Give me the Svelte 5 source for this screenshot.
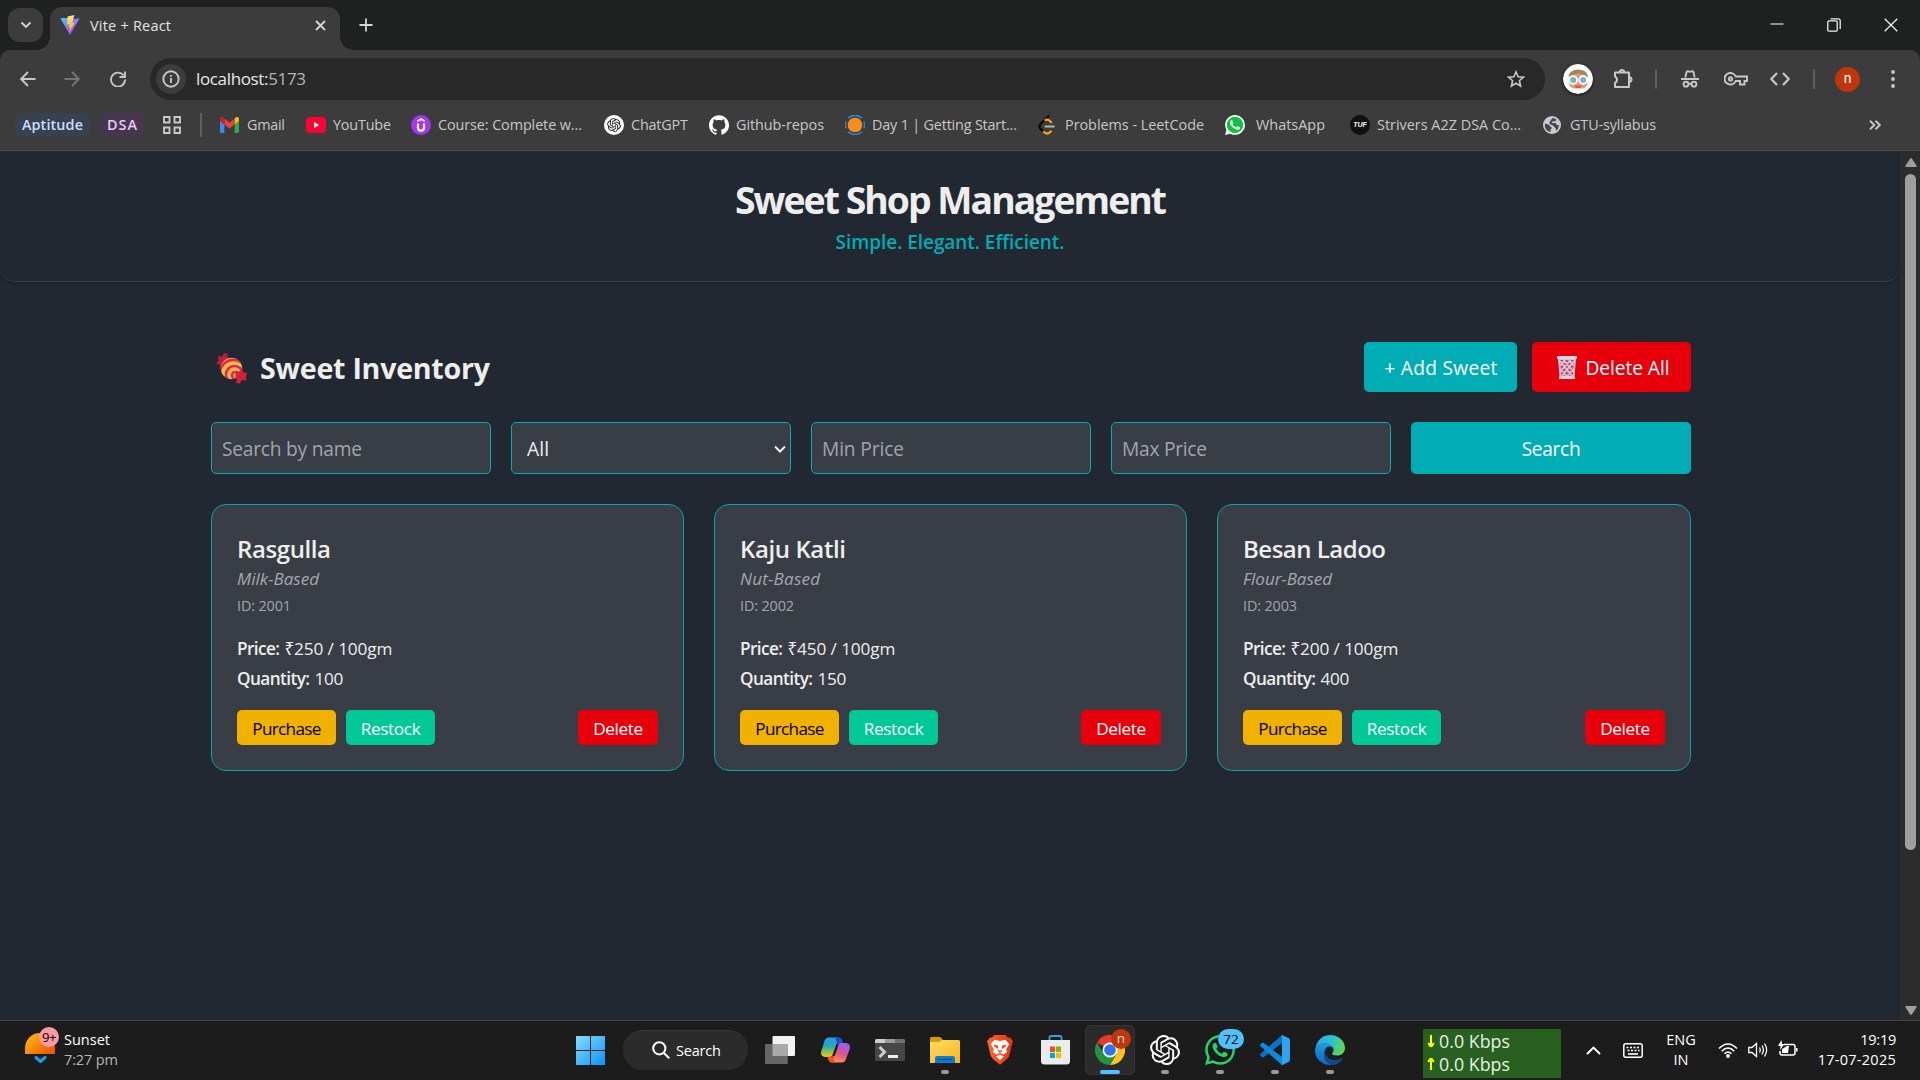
<script>
  const sweets = [
    { name: 'Rasgulla', nameW: 94, type: 'Milk-Based', typeW: 82, id: 2001, price: 250, qty: 100 },
    { name: 'Kaju Katli', nameW: 106, type: 'Nut-Based', typeW: 80, id: 2002, price: 450, qty: 150 },
    { name: 'Besan Ladoo', nameW: 143, type: 'Flour-Based', typeW: 89, id: 2003, price: 200, qty: 400 }
  ];

  const bookmarks = [
    { icon: 'gmail', label: 'Gmail', w: 38 },
    { icon: 'youtube', label: 'YouTube', w: 58 },
    { icon: 'udemy', label: 'Course: Complete w...', w: 144 },
    { icon: 'chatgpt', label: 'ChatGPT', w: 57 },
    { icon: 'github', label: 'Github-repos', w: 88 },
    { icon: 'day', label: 'Day 1 | Getting Start...', w: 145 },
    { icon: 'leet', label: 'Problems - LeetCode', w: 139 },
    { icon: 'whatsapp', label: 'WhatsApp', w: 69, wide: true },
    { icon: 'tuf', label: 'Strivers A2Z DSA Co...', w: 144 },
    { icon: 'globe', label: 'GTU-syllabus', w: 86 }
  ];

  const apps = [
    { icon: 'taskview' },
    { icon: 'copilot' },
    { icon: 'terminal' },
    { icon: 'explorer', running: true },
    { icon: 'brave' },
    { icon: 'store' },
    { icon: 'chrome', active: true, badge: 'n' },
    { icon: 'openai', running: true },
    { icon: 'wa', running: true, badge: '72' },
    { icon: 'vscode', running: true },
    { icon: 'edge', running: true }
  ];

  const openaiPath =
    'M22.2819 9.8211a5.9847 5.9847 0 0 0-.5157-4.9108 6.0462 6.0462 0 0 0-6.5098-2.9A6.0651 6.0651 0 0 0 4.9807 4.1818a5.9847 5.9847 0 0 0-3.9977 2.9 6.0462 6.0462 0 0 0 .7427 7.0966 5.98 5.98 0 0 0 .511 4.9107 6.051 6.051 0 0 0 6.5146 2.9001A5.9847 5.9847 0 0 0 13.2599 24a6.0557 6.0557 0 0 0 5.7718-4.2058 5.9894 5.9894 0 0 0 3.9977-2.9001 6.0557 6.0557 0 0 0-.7475-7.0729zm-9.022 12.6081a4.4755 4.4755 0 0 1-2.8764-1.0408l.1419-.0804 4.7783-2.7582a.7948.7948 0 0 0 .3927-.6813v-6.7369l2.02 1.1686a.071.071 0 0 1 .038.052v5.5826a4.504 4.504 0 0 1-4.4945 4.4944zm-9.6607-4.1254a4.4708 4.4708 0 0 1-.5346-3.0137l.142.0852 4.783 2.7582a.7712.7712 0 0 0 .7806 0l5.8428-3.3685v2.3324a.0804.0804 0 0 1-.0332.0615L9.74 19.9502a4.4992 4.4992 0 0 1-6.1408-1.6464zM2.3408 7.8956a4.485 4.485 0 0 1 2.3655-1.9728V11.6a.7664.7664 0 0 0 .3879.6765l5.8144 3.3543-2.0201 1.1685a.0757.0757 0 0 1-.071 0l-4.8303-2.7865A4.504 4.504 0 0 1 2.3408 7.872zm16.5963 3.8558L13.1038 8.364 15.1192 7.2a.0757.0757 0 0 1 .071 0l4.8303 2.7913a4.4944 4.4944 0 0 1-.6765 8.1042v-5.6772a.79.79 0 0 0-.407-.667zm2.0107-3.0231l-.142-.0852-4.7735-2.7818a.7759.7759 0 0 0-.7854 0L9.409 9.2297V6.8974a.0662.0662 0 0 1 .0284-.0615l4.8303-2.7866a4.4992 4.4992 0 0 1 6.6802 4.66zM8.3065 12.863l-2.02-1.1638a.0804.0804 0 0 1-.038-.0567V6.0742a4.4992 4.4992 0 0 1 7.3757-3.4537l-.142.0805L8.704 5.459a.7948.7948 0 0 0-.3927.6813zm1.0976-2.3654l2.602-1.4998 2.6069 1.4998v2.9994l-2.5974 1.4997-2.6067-1.4997Z';
  const githubPath =
    'M12 .297c-6.63 0-12 5.373-12 12 0 5.303 3.438 9.8 8.205 11.385.6.113.82-.258.82-.577 0-.285-.01-1.04-.015-2.04-3.338.724-4.042-1.61-4.042-1.61C4.422 18.07 3.633 17.7 3.633 17.7c-1.087-.744.084-.729.084-.729 1.205.084 1.838 1.236 1.838 1.236 1.07 1.835 2.809 1.305 3.495.998.108-.776.417-1.305.76-1.605-2.665-.3-5.466-1.332-5.466-5.93 0-1.31.465-2.38 1.235-3.22-.135-.303-.54-1.523.105-3.176 0 0 1.005-.322 3.3 1.23.96-.267 1.98-.399 3-.405 1.02.006 2.04.138 3 .405 2.28-1.552 3.285-1.23 3.285-1.23.645 1.653.24 2.873.12 3.176.765.84 1.23 1.91 1.23 3.22 0 4.61-2.805 5.625-5.475 5.92.42.36.81 1.096.81 2.22 0 1.606-.015 2.896-.015 3.286 0 .315.21.69.825.57C20.565 22.092 24 17.592 24 12.297c0-6.627-5.373-12-12-12';
  const handsetPath =
    'M17.472 14.382c-.297-.149-1.758-.867-2.03-.967-.273-.099-.471-.148-.67.15-.197.297-.767.966-.94 1.164-.173.199-.347.223-.644.075-.297-.15-1.255-.463-2.39-1.475-.883-.788-1.48-1.761-1.653-2.059-.173-.297-.018-.458.13-.606.134-.133.298-.347.446-.52.149-.174.198-.298.298-.497.099-.198.05-.371-.025-.52-.075-.149-.669-1.612-.916-2.207-.242-.579-.487-.5-.669-.51-.173-.008-.371-.01-.57-.01-.198 0-.52.074-.792.372-.272.297-1.04 1.016-1.04 2.479 0 1.462 1.065 2.875 1.213 3.074.149.198 2.096 3.2 5.077 4.487.709.306 1.262.489 1.694.625.712.227 1.36.195 1.871.118.571-.085 1.758-.719 2.006-1.413.248-.694.248-1.289.173-1.413-.074-.124-.272-.198-.57-.347';
  const bubblePath =
    'm12.051 21.785h-.004a9.87 9.87 0 01-5.031-1.378l-.361-.214-3.741.982.998-3.648-.235-.374a9.86 9.86 0 01-1.51-5.26c.001-5.45 4.436-9.884 9.888-9.884 2.64 0 5.122 1.03 6.988 2.898a9.825 9.825 0 012.893 6.994c-.003 5.45-4.437 9.884-9.885 9.884m8.413-18.297A11.815 11.815 0 0012.05 0C5.495 0 .16 5.335.157 11.892c0 2.096.547 4.142 1.588 5.945L.057 24l6.305-1.654a11.882 11.882 0 005.683 1.448h.005c6.554 0 11.89-5.335 11.893-11.893a11.821 11.821 0 00-3.48-8.413z';

  // Tracks a text run so that it spans the given width in pixels.
  function fit(node, width) {
    const natural = node.getBoundingClientRect().width;
    const gaps = node.textContent.trim().length - 1;
    if (gaps > 0) node.style.letterSpacing = `${(width - natural) / gaps}px`;
  }
</script>

{#snippet txt(text, w)}<span class="t" use:fit={w}>{text}</span>{/snippet}

{#snippet icon(name)}
  {#if name === 'vite'}
    <svg width="20" height="20" viewBox="0 0 20 20">
      <defs>
        <linearGradient id="va" x1="0" y1="0" x2=".6" y2="1"><stop offset="0" stop-color="#41d1ff" /><stop offset="1" stop-color="#bd34fe" /></linearGradient>
        <linearGradient id="vb" x1=".4" y1="0" x2=".6" y2="1"><stop offset="0" stop-color="#ffea83" /><stop offset="1" stop-color="#ffa800" /></linearGradient>
      </defs>
      <path d="M.4 3.2 10 20 19.7 3.2l-6.3 1-6.7-1.1z" fill="url(#va)" />
      <path d="M14.4 0 7.6 1.4 7 9.6l2.3-.5-.7 3.6 1.7-.5-.9 5.2 5.4-9.9-2.5.5z" fill="url(#vb)" />
    </svg>
  {:else if name === 'gmail'}
    <svg width="19" height="16" viewBox="0 0 20 16" preserveAspectRatio="none">
      <path d="M0 3v11.5Q0 16 1.4 16H4.6V7z" fill="#4285f4" />
      <path d="M20 3v11.5Q20 16 18.6 16H15.4V7z" fill="#34a853" />
      <path d="M15.4 1.8V7.5L20 4V2.2C20 .3 17.9-.8 16.4.6z" fill="#fbbc04" />
      <path d="M4.6 7.5V1.6L10 5.7l5.4-4.1v5.9L10 11.6z" fill="#ea4335" />
      <path d="M0 2.2V4l4.6 3.5V1.8L3.6.6C2.100-.8 0 .3 0 2.200z" fill="#c5221f" />
    </svg>
  {:else if name === 'youtube'}
    <svg width="20" height="16" viewBox="0 0 20 16"><rect width="20" height="16" rx="4" fill="#ff0033" /><path d="M8 5v6l5.200-3z" fill="#fff" /></svg>
  {:else if name === 'udemy'}
    <svg width="20" height="20" viewBox="0 0 20 20"><circle cx="10" cy="10" r="10" fill="#a435f0" /><path d="M7 8.500v4.200a3 3 0 0 0 6 0V8.500" fill="none" stroke="#fff" stroke-width="2.200" /><path d="M6.300 6.200 10 4l3.700 2.200" fill="none" stroke="#fff" stroke-width="1.700" /></svg>
  {:else if name === 'chatgpt'}
    <svg width="20" height="20" viewBox="0 0 20 20"><circle cx="10" cy="10" r="10" fill="#fff" /><path d={openaiPath} transform="translate(3.200 3.200) scale(.567)" fill="#111" /></svg>
  {:else if name === 'github'}
    <svg width="20" height="20" viewBox="0 0 24 24"><path d={githubPath} fill="#fff" /></svg>
  {:else if name === 'day'}
    <svg width="20" height="20" viewBox="0 0 20 20"><circle cx="10" cy="10" r="7.300" fill="#fa8c1e" /><path d="M3 3.200Q10-2.400 17 3.200M3 16.800q7 5.600 14 0M1.200 6.500Q-.3 10 1.200 13.500M18.800 6.500q1.500 3.500 0 7" fill="none" stroke="#2e86c9" stroke-width="1.500" /></svg>
  {:else if name === 'leet'}
    <svg width="17" height="20" viewBox="0 0 17 20" fill="none" stroke-width="2.200" stroke-linecap="round"><path d="M10.500 1.200 2.600 8.700q-2.300 2.600 0 5.200L5.800 17" stroke="#090909" /><path d="M7.500 5q2.400-1.200 4.600 1.300l1 1M5.800 17q3.500 3.200 7-.6" stroke="#ffa116" /><path d="M7.500 11.500h8.200" stroke="#b3b3b3" /></svg>
  {:else if name === 'whatsapp'}
    <svg width="20" height="20" viewBox="0 0 24 24"><path d="M12.050 0C5.500 0 .16 5.300.16 11.900c0 2.100.55 4.100 1.600 5.900L.06 24l6.300-1.650a11.900 11.900 0 0 0 17.600-10.450A11.900 11.900 0 0 0 12.050 0z" fill="#fff" /><circle cx="12" cy="12" r="9.900" fill="#10c043" /><path d={handsetPath} fill="#fff" /></svg>
  {:else if name === 'tuf'}
    <span class="tuf">TUF</span>
  {:else if name === 'globe'}
    <svg width="18" height="18" viewBox="0 0 18 18"><circle cx="9" cy="9" r="9" fill="#c7cacf" /><path d="M2 7.500Q5 8 6.500 9.500t2 1.500Q9 13 7.500 13.500V16Q2.500 15 1.800 10zM9.500 2q2.500.3 4 1.700L12 5.500 10 5 8.500 7h4l1 1.800 2.500.4Q15.600 13 13 14.800 13.500 12 11.500 11L10 9.500 6.500 8V6L8 4z" fill="#44474b" /></svg>
  {:else if name === 'taskview'}
    <svg width="30" height="28" viewBox="0 0 30 28"><rect x="7.500" width="22.500" height="20" rx="1" fill="#f2f2f2" /><rect y="8" width="22.800" height="20" rx="1" fill="#666" /><path d="M7.500 8h15.300v12H7.500z" fill="#a9a9a9" /></svg>
  {:else if name === 'copilot'}
    <svg width="29" height="26" viewBox="0 0 29 26">
      <defs>
        <linearGradient id="ca" x1="0" y1="0" x2="0" y2="1"><stop offset="0" stop-color="#1f9df5" /><stop offset=".45" stop-color="#2ba8b5" /><stop offset=".75" stop-color="#8cc63f" /><stop offset="1" stop-color="#f7c51e" /></linearGradient>
        <linearGradient id="cb" x1=".6" y1="0" x2=".3" y2="1"><stop offset="0" stop-color="#9b5cf6" /><stop offset=".5" stop-color="#e2508f" /><stop offset="1" stop-color="#fd9a52" /></linearGradient>
      </defs>
      <path d="M8 .5h9.500q2.500 0 3.300 2.500l1 3.500H16L12 17q-1 3-3.500 3H4q-5-.5-3.700-6L3.500 4Q4.500.5 8 .5z" fill="url(#ca)" />
      <path d="M14 .5h3.500q2.500 0 3.300 2.500l1 3.500h-5.500q-1-.5-1-3z" fill="#1850d5" />
      <path d="M20.500 25.500H11q-2.500 0-3.300-2.500l-.9-3.200H12L16.500 9q1-3 3.500-3h5q5 .5 3.700 6L25 22q-1 3.500-4.500 3.500z" fill="url(#cb)" />
      <path d="M15 25.500h-4q-2.500 0-3.300-2.500l-.9-3.200h5.500q1.200 1 .7 3z" fill="#f0542d" />
      <path d="m15.500 7-4 11.500 2 .8 4.200-11.800z" fill="#1c1c1c" />
    </svg>
  {:else if name === 'terminal'}
    <svg width="30" height="22" viewBox="0 0 30 22"><rect width="30" height="22" rx="1.500" fill="#464646" /><path d="M0 4V1.500Q0 0 1.500 0H10v4z" fill="#ccc" /><path d="M10 0h10v4H10z" fill="#9b9b9b" /><path d="M20 0h8.500Q30 0 30 1.500V4H20z" fill="#707070" /><path d="m4.500 8 5 5-5 5" fill="none" stroke="#ccc" stroke-width="3" /><path d="M13 16h10v3H13z" fill="#eee" /></svg>
  {:else if name === 'explorer'}
    <svg width="30" height="27" viewBox="0 0 30 27"><defs><linearGradient id="ea" x1="0" y1="0" x2="1" y2="1"><stop offset="0" stop-color="#ffdc6b" /><stop offset="1" stop-color="#fab413" /></linearGradient></defs><path d="M0 6V1.500Q0 0 1.500 0H9q1.500 0 2.500 1.200L13 3h12v4z" fill="#dd9a05" /><path d="M0 5h9l3-2h16.500Q30 3 30 4.500V26H0z" fill="url(#ea)" /><path d="M5 26v-5q0-2 2-2h16q2 0 2 2v5z" fill="#0e7bd0" /><path d="M8 22.500h14" stroke="#0a4f96" stroke-width="1.200" /></svg>
  {:else if name === 'brave'}
    <svg width="26" height="30" viewBox="0 0 26 30"><defs><linearGradient id="ba" x1="0" x2="1"><stop offset="0" stop-color="#fb6a2c" /><stop offset="1" stop-color="#ee2b12" /></linearGradient></defs><path d="M7.500 0h11L21 2.600l2.500.2L26 6.500l-1 2.800L22.500 20Q22 22.500 20 24l-7 5.800L6 24q-2-1.500-2.500-4L1 9.300 0 6.500l2.500-3.700 2.500-.2z" fill="url(#ba)" /><path d="M7.500 4.800 13 6l5.500-1.200 3.700 4.400-3 5.300.8 2.500-3.300 2.500L13 18l-3.700 1.500L6 17l.8-2.500-3-5.300zM13 19.500l3.800 2L13 25l-3.800-3.500z" fill="#fff" /><path d="m7 10.300 3.800.9-.3 1.800zM19 10.300l-3.800.9.3 1.800zM10.800 14.800 13 17.300l2.200-2.500" fill="none" stroke="#f1421c" stroke-width="1.100" /></svg>
  {:else if name === 'store'}
    <svg width="29" height="30" viewBox="0 0 29 30"><path d="M8.500 8V2.500Q8.500 1 10 1h9q1.500 0 1.500 1.500V8" fill="none" stroke="#2aa4e8" stroke-width="1.800" /><path d="M0 5h29v21q0 3.500-3.500 3.500h-22Q0 29.500 0 26z" fill="#ebebeb" /><path d="M9 11.500h5V17H9z" fill="#f25022" /><path d="M15 11.500h5V17h-5z" fill="#7fba00" /><path d="M9 17.800h5v5.200H9z" fill="#00a4ef" /><path d="M15 17.800h5v5.200h-5z" fill="#ffb900" /></svg>
  {:else if name === 'chrome'}
    <svg width="30" height="30" viewBox="0 0 30 30"><path d="M15 15 2 7.500A15 15 0 0 1 28 7.500z" fill="#e33b2e" /><path d="M15 15V7.500h13A15 15 0 0 1 15 30l6.500-11.200z" fill="#fcc31e" /><path d="M15 15l6.500 3.800L15 30A15 15 0 0 1 2 7.500l6.500 11.300z" fill="#229342" /><circle cx="15" cy="15" r="7.500" fill="#fff" /><circle cx="15" cy="15" r="5.800" fill="#2f74e8" /></svg>
  {:else if name === 'openai'}
    <svg width="30" height="30" viewBox="0 0 24 24"><path d={openaiPath} fill="#fff" /></svg>
  {:else if name === 'wa'}
    <svg width="30" height="30" viewBox="0 0 24 24" fill="#25d366"><path d={handsetPath} /><path d={bubblePath} /></svg>
  {:else if name === 'vscode'}
    <svg width="30" height="30" viewBox="0 0 30 30"><path d="M22 0v8L4 22q-1.200.8-2.200 0L.5 20.700q-1-1 0-2z" fill="#0b72c4" /><path d="M22 30v-8L4 8q-1.200-.8-2.200 0L.5 9.300q-1 1 0 2z" fill="#1388d8" /><path d="M22 0q-.6.200-1 .6Q22 .2 22 2v26q0 1.800-1 1.400.600.6 1.600.5L28.500 27q1.500-.8 1.500-2V5q0-1.200-1.500-2z" fill="#2ea4f0" /></svg>
  {:else if name === 'edge'}
    <svg width="30" height="30" viewBox="0 0 30 30">
      <defs>
        <linearGradient id="ga" x1="0" y1=".2" x2="1" y2=".4"><stop offset="0" stop-color="#2aa9ea" /><stop offset=".55" stop-color="#2cc1cf" /><stop offset="1" stop-color="#5fd84c" /></linearGradient>
        <linearGradient id="gb" x1="0" y1="0" x2="0" y2="1"><stop offset="0" stop-color="#1b9de2" /><stop offset="1" stop-color="#1067b9" /></linearGradient>
      </defs>
      <path d="M.5 13C2 4.500 8.500 0 15 0c8.500 0 15 6 15 13 0 5-4 7.500-8 7.500-3.500 0-5.300-1-5-2 1.200-1.500 1.800-2.500 1.500-4.500C18 10 13 8.500 9 8.500S2 10 .5 13z" fill="url(#ga)" />
      <path d="M0 15.500C.4 10.500 4.500 7.500 9.500 7.500S18.500 10 18.500 14c-.5-1.500-2-2.500-4-2.500-3 0-5.500 3.500-5.500 8 0 5.500 4.500 9 8.500 10.200-9 1.500-17.500-5-17.500-14.200z" fill="url(#gb)" />
      <path d="M12 13.500c-4 5 .5 12 8.500 11.500 3 0 5-1.200 7-2.300.5-.2.800.2.500.6C25.500 27.500 21.500 30 17.500 30 12.500 29 9 25 9 20c0-3 1-5 3-6.500z" fill="#104a8b" />
    </svg>
  {/if}
{/snippet}

<div class="screen">
  <div class="tabstrip">
    <div class="tabsearch"><svg width="12" height="8" viewBox="0 0 12 8"><path d="m1.500 1.500 4.500 4.500 4.500-4.500" /></svg></div>
    <div class="tab">
      {@render icon('vite')}
      <div class="tabtitle">{@render txt('Vite + React', 81)}</div>
      <svg width="11" height="11" viewBox="0 0 11 11"><path d="m1 1 9 9m0-9-9 9" /></svg>
    </div>
    <svg class="newtab" width="14" height="14" viewBox="0 0 14 14"><path d="M7 .5v13M.5 7h13" /></svg>
    <div class="winctl">
      <svg width="14" height="14" viewBox="0 0 14 14"><path d="M.5 6h13" stroke="#909090" stroke-width="2" /></svg>
      <svg width="14" height="14" viewBox="0 0 14 14"><path d="M.8 4q0-1.200 1.200-1.200h7q1.200 0 1.200 1.200v8q0 1.200-1.200 1.200H2Q.8 13.200.8 12zM3.500.8h7.700q2 0 2 2V11" /></svg>
      <svg width="14" height="14" viewBox="0 0 14 14"><path d="m.7.7 12.600 12.600m0-12.600L.7 13.300" /></svg>
    </div>
  </div>

  <div class="chrome">
    <div class="toolbar">
      <span><svg width="16" height="16" viewBox="0 0 16 16"><path d="M15.500 8H1.500M8 1 1.200 8 8 15" /></svg></span>
      <span class="dim"><svg width="16" height="16" viewBox="0 0 16 16"><path d="M.5 8h14M8 1l6.800 7L8 15" /></svg></span>
      <span><svg width="16" height="16" viewBox="0 0 16 16"><path d="M13.500 4.300A7 7 0 1 0 15 8.500M15 .5V6H9.500" /></svg></span>
      <div class="omni">
        <div class="info"><svg width="18" height="18" viewBox="0 0 18 18"><circle cx="9" cy="9" r="7.700" /><path d="M9 8v5M9 5v1.700" /></svg></div>
        <div class="url"><span class="t" use:fit={110}>localhost:<i>5173</i></span></div>
        <svg width="18" height="18" viewBox="0 0 18 18"><path d="m9 1.800 2.100 4.900 5.400.5-4.100 3.500 1.200 5.300L9 13.200 4.400 16l1.200-5.300-4.100-3.500 5.400-.5z" stroke-width="1.600" /></svg>
      </div>
      <span>
        <svg class="face" width="30" height="30" viewBox="0 0 30 30">
          <circle cx="15" cy="15" r="15" fill="#fff" stroke="none" />
          <g stroke="none"><path d="M6 15q0-9 9.500-9T24.500 15v5q-1 4-5 4.500h-9Q6.500 23 6 19z" fill="#dca07c" /><path d="M5.500 13Q6 5.500 15.500 5.500q9.500.5 9.500 8L22 11 15 9.500 7 12z" fill="#a08a5c" /><path d="M11.500 21.500h7.500l-1.500 2.500h-5z" fill="#e8573c" /></g>
          <g fill="#79b3c4" stroke="#fff" stroke-width="1.700"><circle cx="10.200" cy="16" r="3.900" /><circle cx="20.200" cy="16" r="3.900" /></g>
        </svg>
      </span>
      <span><svg width="20" height="21" viewBox="0 0 20 21"><path d="M2 3.500h14v14.500H2v-4.200q2-.600 2-3t-2-3zM6.700 3Q7 1 9 1t2.300 2M16.500 8q2 .4 2 2.500t-2 2.500" stroke-linejoin="round" stroke-width="2" /></svg></span>
      <b class="sep"></b>
      <span><svg width="18" height="18" viewBox="0 0 18 18"><path d="M4.300 7.500 5.500 2.300Q6 1 7.300 1.400 9 2 10.700 1.400 12 1 12.500 2.300l1.200 5.200M0 9h18" /><circle cx="5" cy="14.200" r="2.400" /><circle cx="13" cy="14.200" r="2.400" /><path d="M7.400 13.800h3.200" /></svg></span>
      <span><svg width="24" height="14" viewBox="0 0 24 14"><path d="M11.700 4.500A5.800 5.800 0 1 0 11.700 9H16v3.500h4.500V9H23V4.500z" stroke-width="1.900" /><circle cx="6.500" cy="6.900" r="1.600" /></svg></span>
      <span><svg width="20" height="14" viewBox="0 0 20 14"><path d="M7 1 1.300 7 7 13M13 1l5.700 6L13 13" stroke-width="2.200" /></svg></span>
      <b class="sep"></b>
      <em class="user">n</em>
      <span class="dots"><svg width="4" height="18" viewBox="0 0 4 18"><g fill="#c7c7c7" stroke="none"><circle cx="2" cy="2" r="1.900" /><circle cx="2" cy="9" r="1.900" /><circle cx="2" cy="16" r="1.900" /></g></svg></span>
    </div>

    <div class="bookmarks">
      <div class="chip blue">{@render txt('Aptitude', 61)}</div>
      <div class="chip purple">{@render txt('DSA', 30)}</div>
      <svg class="grid" width="18" height="18" viewBox="0 0 18 18"><path d="M1 1h5.500v5.500H1zM11.500 1H17v5.500h-5.500zM1 11.500h5.500V17H1zM11.500 11.500H17V17h-5.500z" /></svg>
      <b class="sep"></b>
      <div class="links">
        {#each bookmarks as b}
          <div class="link"><span class="fav" class:wide={b.wide}>{@render icon(b.icon)}</span>{@render txt(b.label, b.w)}</div>
        {/each}
      </div>
      <svg class="more" width="12" height="10" viewBox="0 0 12 10"><path d="m1 .8 4.300 4.200L1 9.200M6.500.8 10.800 5 6.500 9.200" /></svg>
    </div>
  </div>

  <div class="viewport">
    <div class="page">
      <header>
        <h1>{@render txt('Sweet Shop Management', 432)}</h1>
        <p>{@render txt('Simple. Elegant. Efficient.', 229)}</p>
      </header>
      <main>
        <div class="head">
          <svg class="candy" width="31" height="31" viewBox="0 0 31 31">
            <defs><clipPath id="ball"><circle cx="15.500" cy="15.500" r="10.700" /></clipPath></defs>
            <path d="M11 10.500 9.500 12 6.500 14 4 15 4 12 0 10.500 2.500 7.500 2 3 6 3.500 8 0l3.500.5L12 5z" fill="#b81d40" />
            <g clip-path="url(#ball)">
              <path d="M4 4h23v23H4z" fill="#f9b93f" />
              <g fill="none" stroke="#d42a5c" stroke-width="2.600"><circle cx="19.500" cy="22.500" r="3.500" /><circle cx="18.500" cy="21.500" r="8.500" /><circle cx="17.500" cy="20.500" r="13.600" /></g>
            </g>
            <path d="M20 19.500 24 18l2.500-1 .5 2.500 4 .5-1 3.500.5 4-4.500-.5-2 3.500-4-.5 1-4-2-3z" fill="#d4213d" />
          </svg>
          <h2>{@render txt('Sweet Inventory', 230)}</h2>
          <button class="add">{@render txt('+ Add Sweet', 113)}</button>
          <button class="delall">
            <svg width="20" height="23" viewBox="0 0 20 23"><path d="M1 2h18l-1.700 20H2.700z" fill="#d8405f" /><g fill="none" stroke="#cfc8dc" stroke-width="1.800"><path d="M2 3h16l-1.500 18h-13zM3 5l12 15M2.500 12l8 9M6.500 4 17 16M12 4l6 7M17 5 5 20M17.500 12l-8 9M13.500 4 3 16M8 4l-6 7" /></g><path d="M0 0h20v3H0zM2 20.500h16V23H2z" fill="#ded8e6" /></svg>
            {@render txt('Delete All', 84)}
          </button>
        </div>
        <div class="filters">
          <div class="field">{@render txt('Search by name', 140)}</div>
          <div class="field select">{@render txt('All', 22)}<svg width="12" height="8" viewBox="0 0 12 8"><path d="m1 1.500 5 5 5-5" /></svg></div>
          <div class="field">{@render txt('Min Price', 82)}</div>
          <div class="field">{@render txt('Max Price', 85)}</div>
          <button class="search">{@render txt('Search', 59)}</button>
        </div>
        <div class="cards">
          {#each sweets as s}
            <article>
              <h3>{@render txt(s.name, s.nameW)}</h3>
              <div class="type">{@render txt(s.type, s.typeW)}</div>
              <div class="id">{@render txt(`ID: ${s.id}`, 54)}</div>
              <div class="row first"><strong>{@render txt('Price:', 43)}</strong>{@render txt(`₹${s.price} / 100gm`, 108)}</div>
              <div class="row"><strong>{@render txt('Quantity:', 73)}</strong>{@render txt(`${s.qty}`, 29)}</div>
              <div class="actions">
                <button class="buy">{@render txt('Purchase', 69)}</button>
                <button class="restock">{@render txt('Restock', 60)}</button>
                <button class="del">{@render txt('Delete', 50)}</button>
              </div>
            </article>
          {/each}
        </div>
      </main>
    </div>
    <div class="scrollbar">
      <svg width="12" height="9" viewBox="0 0 12 9"><path d="M6 0q.6 0 1 .7L11.700 8q.3 1-.7 1H1Q0 9 .3 8L5 .7Q5.400 0 6 0z" /></svg>
      <div class="thumb"></div>
      <svg class="down" width="12" height="9" viewBox="0 0 12 9"><path d="M6 9q-.6 0-1-.7L.3 1Q0 0 1 0h10q1 0 .7 1L7 8.300Q6.600 9 6 9z" /></svg>
    </div>
  </div>

  <div class="taskbar">
    <div class="weather">
      <div class="sun">
        <svg width="32" height="30" viewBox="0 0 32 30"><defs><linearGradient id="sa" x1="0" y1="0" x2="1" y2=".8"><stop offset="0" stop-color="#ffc20e" /><stop offset="1" stop-color="#e8590c" /></linearGradient></defs><path d="M0 21v-6a15 15 0 0 1 30 0v6z" fill="url(#sa)" /><path d="m11 24.500 4.500 4 4.500-4" fill="none" stroke="#1b9be8" stroke-width="3.200" stroke-linecap="round" /></svg>
        <em>9+</em>
      </div>
      <div class="two"><div>{@render txt('Sunset', 46)}</div><div class="grey">{@render txt('7:27 pm', 54)}</div></div>
    </div>
    <div class="start">
      <svg width="29" height="29" viewBox="0 0 29 29"><defs><linearGradient id="wa" x1="0" y1="0" x2="1" y2="1"><stop offset="0" stop-color="#86dcff" /><stop offset="1" stop-color="#0d93f5" /></linearGradient></defs><path d="M0 0h14v14H0zM15 0h14v14H15zM0 15h14v14H0zM15 15h14v14H15z" fill="url(#wa)" /></svg>
    </div>
    <div class="pill">
      <svg width="18" height="18" viewBox="0 0 18 18"><circle cx="7.300" cy="7.300" r="6.100" /><path d="m11.700 11.700 5.500 5.500" /></svg>
      {@render txt('Search', 45)}
    </div>
    {#each apps as a}
      <div class="app" class:active={a.active} class:running={a.running}>
        {@render icon(a.icon)}
        {#if a.badge}<em class:red={a.badge === 'n'}>{a.badge}</em>{/if}
      </div>
    {/each}
    <div class="net">
      {#each ['M4 0v11M1.200 8 4 12l2.800-4', 'M4 12V1M1.200 4 4 0l2.800 4'] as arrow}
        <div><svg width="8" height="12" viewBox="0 0 8 12"><path d={arrow} /></svg>{@render txt('0.0 Kbps', 71)}</div>
      {/each}
    </div>
    <div class="tray">
      <span><svg width="15" height="9" viewBox="0 0 15 9"><path d="m1 8 6.500-6.500L14 8" stroke-width="1.900" /></svg></span>
      <span><svg width="20" height="15" viewBox="0 0 20 15"><rect x=".8" y=".8" width="18.400" height="13.400" rx="2" stroke-width="1.500" /><path d="M3.500 4.500h13M4.500 7.500h12" stroke-dasharray="2 1.500" stroke-width="1.600" /><path d="M5 11h10" stroke-width="1.600" /></svg></span>
      <span class="two"><div>ENG</div><div>IN</div></span>
      <span><svg width="20" height="16" viewBox="0 0 20 16"><path d="M1 6.500q9-9 18 0M3.700 9.200q6.300-6.400 12.600 0M6.500 11.800q3.500-3.500 7 0" stroke-width="1.500" /><circle cx="10" cy="14" r="1.900" fill="#fff" stroke="none" /></svg></span>
      <span><svg width="20" height="16" viewBox="0 0 20 16"><path d="M.8 5.500h3.200L8.500 1.500v13L4 10.500H.8zM11.500 5.500q1.500 2.500 0 5M14 3.500q2.800 4.500 0 9M16.500 1.500q4.300 6.500 0 13" stroke-width="1.300" /></svg></span>
      <span><svg class="batt" width="20" height="17" viewBox="0 0 20 17"><path d="M6 4.500h9q2 0 2 2V13q0 2-2 2H4q-2 0-2-2v-2M18.800 8v3.500" stroke-width="1.500" /><path d="M4 13V9l5-3h2l-1 7zM3.500 0 0 6h2.500L2 10l4.500-6H4z" fill="#fff" stroke="none" /></svg></span>
    </div>
    <div class="two clock"><div>{@render txt('19:19', 36)}</div><div>{@render txt('17-07-2025', 78)}</div></div>
  </div>
</div>

<style>
  :global(body) { margin: 0; background: #1c1c1c; }
  * { box-sizing: border-box; margin: 0; }
  .screen { width: 1920px; height: 1080px; overflow: hidden; display: flex; flex-direction: column; background: #1f2120; font-family: 'Open Sans', 'Noto Sans', sans-serif; color: #eee; }
  .t { display: inline-block; white-space: nowrap; }
  em, i { font-style: normal; }
  svg { flex: none; display: block; }

  .tabstrip { height: 50px; background: #1f2120; display: flex; align-items: center; padding-left: 8px; }
  .tabstrip svg { stroke: #d5d5d5; fill: none; stroke-width: 1.8; }
  .tabstrip .tab > svg:first-child { stroke: none; }
  .tabsearch { width: 35px; height: 34px; border-radius: 12px; background: #3c3c3c; display: grid; place-items: center; }
  .tab { position: relative; width: 290px; height: 43px; margin: 7px 0 0 7px; padding: 0 14px 7px 10px; border-radius: 12px 12px 0 0; background: #3c3c3c; display: flex; align-items: center; font-size: 14.500px; color: #e3e3e3; }
  .tab::before, .tab::after { content: ''; position: absolute; bottom: 0; width: 13px; height: 13px; }
  .tab::before { left: -13px; background: radial-gradient(circle at 0 0, transparent 12.500px, #3c3c3c 13px); }
  .tab::after { right: -13px; background: radial-gradient(circle at 100% 0, transparent 12.500px, #3c3c3c 13px); }
  .tabtitle { flex: 1; padding-left: 10px; }
  .newtab { margin-left: 19px; }
  .winctl { margin-left: auto; display: flex; gap: 43px; padding-right: 22px; }
  .winctl svg { stroke-width: 1.300; stroke: #eee; }

  .chrome { height: 101px; background: #3c3c3c; border-bottom: 1px solid #4b4b4b; clip-path: inset(0 round 10px 10px 0 0); }
  .toolbar { height: 58px; padding: 8px 0 8px 5px; display: grid; grid-template-columns: 46px 42px 57px 1395px 65px 26px 40px 28px 64px 24px 43px 25px 1fr; align-items: center; }
  .toolbar > * { justify-self: center; }
  .toolbar > span:nth-child(3) { padding-right: 8px; }
  .toolbar svg { fill: none; stroke: #c7c7c7; stroke-width: 1.900; }
  .dim svg { stroke: #757575; }
  .omni { justify-self: stretch !important; height: 42px; border-radius: 21px; background: #282828; display: flex; align-items: center; padding: 0 20px 0 6px; }
  .info { width: 30px; height: 30px; border-radius: 50%; background: #3c3c3c; display: grid; place-items: center; }
  .url { flex: 1; padding: 0 0 1px 10px; font-size: 17px; color: #e8e8e8; }
  .url i { color: #b5b5b5; }
  .sep { width: 2px; height: 20px; background: #5f5f5f; border-radius: 1px; }
  .face { border-radius: 50%; box-shadow: 0 1px 3px #111; }
  .user { width: 25px; height: 25px; border-radius: 50%; background: #bf360c; color: #fff; font: 14px/23px Roboto, sans-serif; text-align: center; }
  .dots { padding-left: 5px; }

  .bookmarks { height: 34px; display: flex; align-items: center; font-size: 14.400px; color: #c7c7c7; }
  .bookmarks .t { position: relative; top: -1px; }
  .chip { height: 24px; border-radius: 6px; display: flex; align-items: center; justify-content: center; font-weight: 600; }
  .blue { width: 75px; margin-left: 15px; background: #38424f; color: #c9deff; }
  .purple { width: 45px; margin: 0 18px 0 10px; background: #46374f; color: #e9c9ff; }
  .bookmarks > svg { fill: none; stroke: #c7c7c7; stroke-width: 1.900; }
  .bookmarks .sep { height: 24px; width: 2px; margin: 0 18px 0 19px; }
  .links { flex: none; width: 1440px; display: grid; grid-template-columns: 86px 105px 193px 105px 136px 193px 187px 125px 193px auto; justify-content: start; }
  .link { display: flex; align-items: center; }
  .fav { width: 27px; flex: none; height: 20px; display: flex; align-items: center; }
  .fav.wide { width: 31px; }
  .tuf { width: 20px; height: 20px; border-radius: 50%; background: #111; color: #fff; font: italic 700 7px/20px 'Liberation Sans', sans-serif; text-align: center; }
  .more { margin-left: 209px; }

  .viewport { height: 869px; display: flex; }
  .page { width: 1900px; background: #222831; }
  .scrollbar { width: 20px; background: #2c2c2c; display: flex; flex-direction: column; align-items: center; padding: 7px 0 5px 1px; }
  .scrollbar svg { fill: #9f9f9f; }
  .thumb { width: 11px; height: 676px; margin-top: 7px; border-radius: 6px; background: #9f9f9f; }
  .down { margin-top: auto; }
  header { height: 131px; padding-top: 25px; border-bottom: 1px solid #393f48; border-radius: 0 0 15px 15px; text-align: center; box-shadow: 0 1px 3px #1b2028; }
  h1 { font-size: 37.300px; line-height: 48px; font-weight: 700; }
  header p { font-size: 19px; line-height: 36px; font-weight: 600; color: #00adb5; }
  main { width: 1480px; margin: 60px 0 0 211px; }
  .head { height: 50px; display: flex; align-items: center; }
  .candy { margin: 2px 13px 0 5px; }
  h2 { flex: 1; font-size: 28.600px; line-height: 50px; padding-top: 2px; }
  button { border: 0; border-radius: 5px; font: inherit; color: #fff; padding: 0; display: flex; align-items: center; justify-content: center; }
  .add { width: 153px; height: 50px; background: #00adb5; font-size: 19.200px; padding-left: 1px; }
  .delall { width: 159px; height: 50px; margin-left: 15px; background: #e7000b; font-size: 19.200px; gap: 9px; padding-left: 3px; }
  .filters { margin-top: 30px; display: grid; grid-template-columns: repeat(5, 280px); gap: 20px; font-size: 19.200px; }
  .field { height: 52px; border: 1px solid #00adb5; border-radius: 5px; background: #393e46; color: #a1a5ab; padding-left: 10px; display: flex; align-items: center; }
  .select { color: #eee; padding: 1px 4px 0 15px; justify-content: space-between; }
  .select svg { fill: none; stroke: #eee; stroke-width: 2; }
  .search { background: #00adb5; }
  .cards { margin-top: 30px; display: grid; grid-template-columns: 473px 473px 474px; gap: 30px; }
  article { height: 267px; border: 1px solid #04a4ac; border-radius: 15px; background: #393e46; padding: 25px 25px 25px; }
  h3 { font-size: 24px; line-height: 38px; font-weight: 600; }
  .type { height: 22px; font-size: 17px; line-height: 21px; font-style: italic; color: #a5a8ac; }
  .id { height: 31px; font-size: 14.400px; line-height: 31px; color: #a1a5aa; }
  .row { height: 30px; font-size: 17.200px; line-height: 30px; display: flex; gap: 5px; }
  .first { margin-top: 13px; }
  .row strong { font-weight: 600; }
  .actions { display: flex; gap: 10px; margin-top: 16px; font-size: 17.200px; }
  .actions button { height: 35px; padding-top: 1px; }
  .buy { width: 99px; background: #f0b100; color: #000; }
  .restock { width: 89px; background: #00c896; }
  .actions .del { width: 80px; background: #e7000b; margin-left: auto; }

  .taskbar { height: 60px; background: #1c1c1c; box-shadow: inset 0 1px #434343; display: flex; align-items: center; font-size: 14.500px; color: #fff; }
  .weather { width: 563px; padding-left: 25px; display: flex; gap: 7px; }
  .sun { position: relative; width: 32px; padding-top: 3px; }
  .sun em { position: absolute; left: 14px; top: -3px; width: 20px; height: 20px; border-radius: 50%; background: #ff99a4; color: #000; font-size: 13px; line-height: 20px; text-align: center; letter-spacing: -.5px; }
  .two { line-height: 20px; }
  .grey { color: #b5b5b5; }
  .start { width: 55px; display: grid; place-items: center; }
  .pill { width: 125px; height: 40px; margin: 0 4.500px 0 5px; border-radius: 20px; background: #2b2b2b; box-shadow: inset 0 1px #363636; display: flex; align-items: center; padding-left: 29px; gap: 6px; }
  .pill svg { fill: none; stroke: #fff; stroke-width: 2; }
  .app { position: relative; width: 55px; height: 50px; flex: none; display: grid; place-items: center; }
  .app.active::before { content: ''; position: absolute; inset: 0 2.500px; border-radius: 5px; background: #2b2b2b; border: 1px solid #333; }
  .app svg { position: relative; }
  .app.running::after, .app.active::after { content: ''; position: absolute; left: 23.500px; bottom: 1px; width: 8px; height: 4px; border-radius: 2px; background: #9a9a9a; }
  .app.active::after { left: 17.500px; width: 20px; background: #4cc2ff; }
  .app em { position: absolute; left: 25.500px; top: 4px; width: 26px; height: 20px; border-radius: 10px; background: #4cc2ff; color: #000; font-size: 13.500px; line-height: 20px; text-align: center; }
  .app em.red { left: 28.500px; width: 20px; background: #bf360c; color: #f5dcd3; line-height: 18px; }
  .net { width: 138px; height: 49px; flex: none; margin: 7px 0 0 65.500px; background: #286020; font-size: 17.800px; line-height: 22px; padding: 1px 0 0 4px; color: #e8efe6; }
  .net div { display: flex; height: 22.500px; align-items: center; gap: 4px; }
  .net svg { fill: none; stroke: #ff0; stroke-width: 2; }
  .tray { display: grid; grid-template-columns: 30px 50px 46px 9px 30px 30px 30px; margin-left: 17px; flex: none; }
  .tray span { display: grid; place-items: center; align-content: center; }
  .tray span:nth-child(4) { grid-column: 5; }
  .tray svg { fill: none; stroke: #fff; }
  .tray .batt { margin-bottom: 3px; }
  .clock { width: 93px; text-align: right; flex: none; }
</style>
